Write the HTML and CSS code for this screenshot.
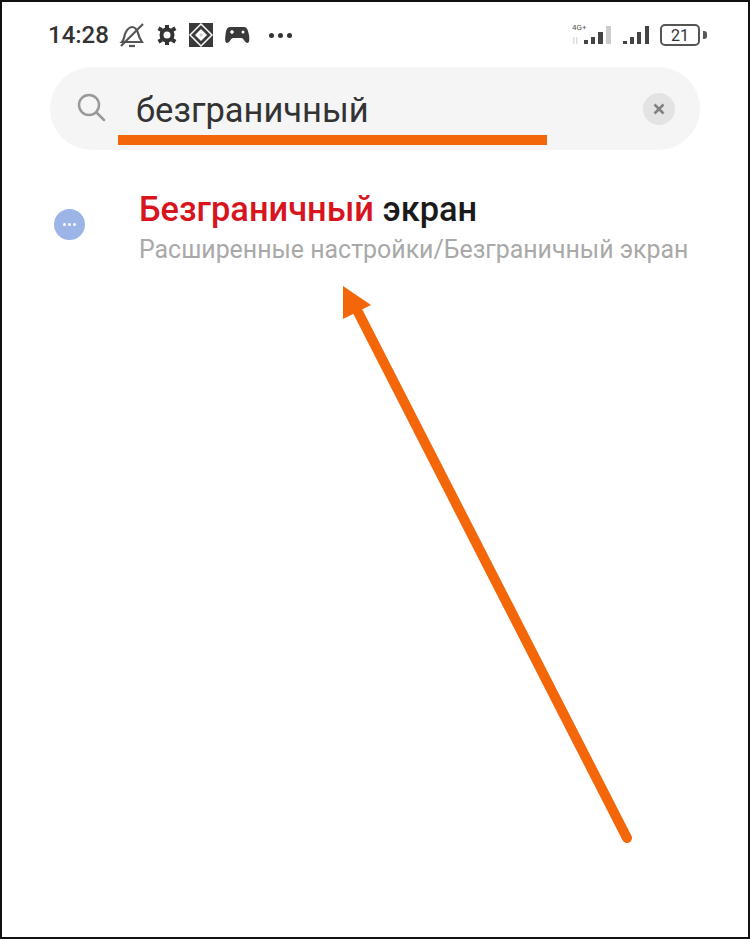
FILE: index.html
```html
<!DOCTYPE html>
<html lang="ru">
<head>
    <meta charset="UTF-8">
    <meta name="viewport" content="width=device-width, initial-scale=1.0">
    <title>Поиск в настройках</title>
    <link rel="stylesheet" href="styles.css">
</head>
<body>
    <div class="screen">
        <div class="status">
            <div class="status-left">
                <span class="time">14:28</span>
                <!-- bell off -->
                <svg class="ic" width="26" height="26" viewBox="0 0 26 26" fill="none" stroke="#555" stroke-width="2.200">
                    <path d="M3 20c2-2 2-5 3-8 1-3 4-7 7-7s5 3 6 6c.6 3 2 6 4 9z"/>
                    <path d="M10 24h6"/>
                    <path d="M2 24 24 2"/>
                </svg>
                <!-- gear -->
                <svg class="ic" width="22" height="22" viewBox="0 0 22 22">
                    <circle cx="11" cy="11" r="5.500" fill="none" stroke="#333" stroke-width="4"/>
                    <path d="M9 1h4v4H9zM9 17h4v4H9zM1.500 6l2-3.400 3.400 2-2 3.400zM15 17.400l2-3.400 3.400 2-2 3.400zM1.500 16l3.400-2 2 3.400-3.400 2zM15 4.600l3.400-2 2 3.400-3.400 2z" fill="#333"/>
                </svg>
                <!-- app icon -->
                <svg class="ic" width="24" height="24" viewBox="0 0 24 24">
                    <rect width="24" height="24" fill="#3a3a3a"/>
                    <path d="M12 1 23 12 12 23 1 12z" fill="none" stroke="#fff" stroke-width="1.500"/>
                    <path d="M12 6 18 12 12 18 6 12z" fill="#fff"/>
                    <path d="M12 10 14 12 12 14 10 12z" fill="#ccc"/>
                </svg>
                <!-- gamepad -->
                <svg class="ic" width="26" height="20" viewBox="0 0 26 20">
                    <path d="M6 2h14c3 0 4 3 5 8 .6 4 .6 8-1.500 8-2.500 0-4-5-6-5H9c-2 0-3.500 5-6 5-2.100 0-2.100-4-1.500-8C2 5 3 2 6 2z" fill="#3a3a3a"/>
                    <circle cx="19" cy="7" r="1.500" fill="#fff"/>
                    <path d="M6 7h4M8 5v4" stroke="#fff" stroke-width="1.500"/>
                </svg>
                <span class="dots"><i></i><i></i><i></i></span>
            </div>
            <div class="status-right">
                <div class="sim">
                    <span class="net">4G+</span>
                    <svg width="46" height="24" viewBox="0 0 46 24">
                        <path d="M1 14h1.500v7H1zM4 14h1.500v7H4z" fill="#ddd"/>
                        <path d="M12 17h4v4h-4zM19 14h4v7h-4zM26 9h5v12h-5z" fill="#444"/>
                        <path d="M34 3h5v18h-5z" fill="#ccc"/>
                    </svg>
                </div>
                <svg width="30" height="22" viewBox="0 0 30 22">
                    <path d="M3 17h4v3H3zM10 13h4v7h-4zM17 8h4v12h-4zM25 2h4v18h-4z" fill="#444"/>
                </svg>
                <div class="battery"><span class="battery-val">21</span></div>
                <span class="battery-tip"></span>
            </div>
        </div>

        <div class="search">
            <svg class="search-ic" width="30" height="30" viewBox="0 0 30 30" fill="none" stroke="#999" stroke-width="2.500" stroke-linecap="round">
                <circle cx="13" cy="13" r="10"/>
                <path d="M21 21l7 7"/>
            </svg>
            <span class="search-text">безграничный</span>
            <span class="clear">
                <svg width="14" height="14" viewBox="0 0 14 14" stroke="#808080" stroke-width="2.500">
                    <path d="M2.500 2.500l9 9M11.500 2.500l-9 9"/>
                </svg>
            </span>
        </div>

        <div class="result">
            <span class="result-ic"><i></i><i></i><i></i></span>
            <div class="result-body">
                <div class="result-title"><span class="hl">Безграничный</span> экран</div>
                <div class="result-path">Расширенные настройки/Безграничный экран</div>
            </div>
        </div>

        <span class="underline"></span>
        <svg class="arrow" width="750" height="939" viewBox="0 0 750 939">
            <path d="M627 838 358 312" stroke="#f4660a" stroke-width="10" stroke-linecap="round" fill="none"/>
            <path d="M343 286 371 305 343 319z" fill="#f4660a"/>
        </svg>
    </div>
</body>
</html>
```

FILE: styles.css
```css
html, body{
    margin: 0;
    padding: 0;
    background-color: #fff;
}

.screen{
    position: relative;
    box-sizing: border-box;
    width: 750px;
    height: 939px;
    border: 2px solid #111;
    background-color: #fff;
    font-family: Roboto, "Noto Sans", sans-serif;
    overflow: hidden;
}

.status{
    display: flex;
    justify-content: space-between;
    align-items: center;
    height: 46px;
    margin-top: 10px;
    padding: 0 41px 0 46px;
}

.status-left{
    display: flex;
    align-items: center;
}

.time{
    font-size: 24px;
    font-weight: 500;
    color: #333;
    margin-right: 10px;
}

.ic{
    margin-right: 11px;
}

.dots{
    display: flex;
    gap: 4px;
    margin-left: 8px;
}

.dots i{
    width: 5px;
    height: 5px;
    border-radius: 50%;
    background-color: #333;
}

.status-right{
    display: flex;
    align-items: center;
}

.sim{
    position: relative;
    display: flex;
    margin-right: 2px;
}

.net{
    position: absolute;
    top: 0;
    left: 0;
    font-size: 8px;
    color: #555;
}

.battery{
    display: flex;
    justify-content: center;
    align-items: center;
    box-sizing: border-box;
    width: 40px;
    height: 22px;
    margin-left: 10px;
    border: 2px solid #555;
    border-radius: 5px;
}

.battery-val{
    font-size: 16px;
    color: #333;
}

.battery-tip{
    width: 4px;
    height: 8px;
    margin-left: 3px;
    border-radius: 0 3px 3px 0;
    background-color: #555;
}

.search{
    display: flex;
    align-items: center;
    height: 83px;
    margin: 9px 48px 0;
    padding: 0 25px 0 26px;
    box-sizing: border-box;
    border-radius: 42px;
    background-color: #f5f5f5;
}

.search-ic{
    flex: none;
    margin-bottom: 3px;
}

.search-text{
    flex: 1;
    margin-left: 30px;
    margin-top: 2px;
    font-size: 34.5px;
    color: #333;
}

.clear{
    display: flex;
    justify-content: center;
    align-items: center;
    width: 32px;
    height: 32px;
    border-radius: 50%;
    background-color: #e3e3e3;
}

.result{
    display: flex;
    align-items: center;
    margin-top: 39px;
    padding-left: 52px;
}

.result-ic{
    display: flex;
    justify-content: center;
    align-items: center;
    gap: 2px;
    flex: none;
    width: 31px;
    height: 31px;
    margin-bottom: 5px;
    border-radius: 50%;
    background-color: #9db5e6;
}

.result-ic i{
    width: 3px;
    height: 3px;
    border-radius: 50%;
    background-color: #fff;
}

.result-body{
    margin-left: 54px;
}

.result-title{
    font-size: 34.4px;
    font-weight: 500;
    line-height: 40px;
    color: #1a1a1a;
}

.hl{
    color: #d8141f;
}

.result-path{
    margin-top: 7px;
    font-size: 24.9px;
    line-height: 28px;
    color: #a9a9a9;
    white-space: nowrap;
}

.underline{
    position: absolute;
    left: 116px;
    top: 133px;
    width: 429px;
    height: 10px;
    background-color: #f4660a;
}

.arrow{
    position: absolute;
    left: -2px;
    top: -2px;
}
```
